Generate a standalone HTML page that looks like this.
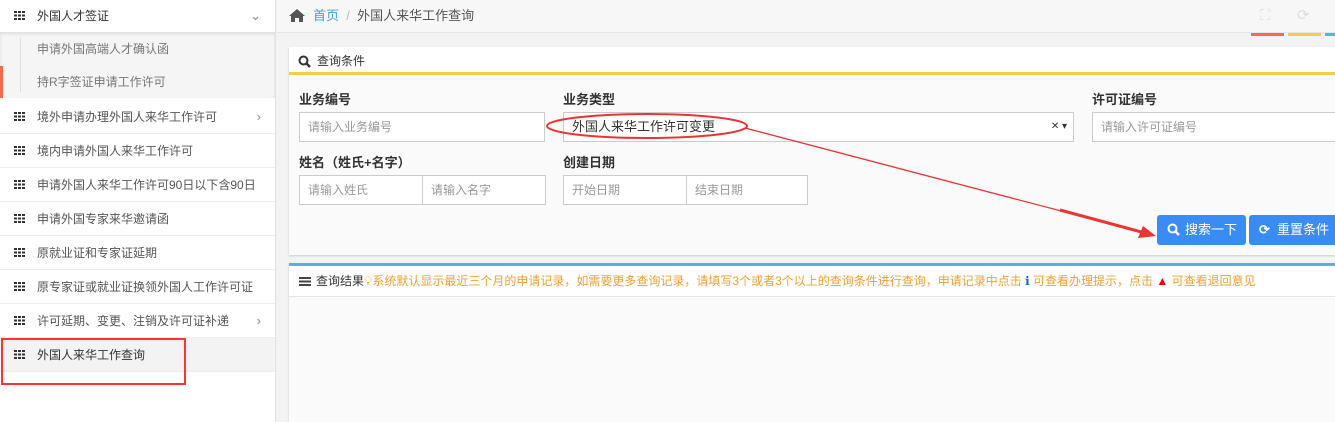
<!DOCTYPE html>
<html><head><meta charset="utf-8"><style>
*{box-sizing:border-box;margin:0;padding:0}
body{width:1335px;height:422px;overflow:hidden;background:#f0f0f0;font-family:"Liberation Sans","Noto Sans CJK SC",sans-serif;font-size:12px;color:#333;position:relative}
.side{position:absolute;left:0;top:0;width:276px;height:422px;background:#fff;border-right:1px solid #e3e3e3}
.it{position:absolute;left:0;width:275px;height:34px;border-bottom:1px solid #eee;line-height:34px;padding-left:37px;color:#555}
.gi{position:absolute;left:14px;top:12px;width:11px;height:9px;background:
linear-gradient(90deg,#333 0 3px,transparent 3px 4px,#333 4px 7px,transparent 7px 8px,#333 8px 11px);
-webkit-mask:repeating-linear-gradient(#000 0 2px,transparent 2px 3.5px);mask:repeating-linear-gradient(#000 0 2.2px,transparent 2.2px 3.4px)}
.chev{position:absolute;right:14px;top:0;color:#888;font-size:13px}
.sub{position:absolute;left:0;top:32px;width:275px;height:66px;background:#f5f5f5;box-shadow:inset 0 2px 3px #ddd}
.sub div{position:absolute;left:37px;color:#777}
.main{position:absolute;left:277px;top:0;right:0;height:422px;background:#f3f3f3}
.bc{position:absolute;left:0;top:0;right:0;height:33px;background:#f7f7f7;border-bottom:1px solid #e5e5e5;line-height:32px;padding-left:36px;font-size:13px;color:#555}
.panel{position:absolute;left:12px;right:0;background:#fafafa;box-shadow:0 1px 2px #ccc}
.lbl{position:absolute;font-weight:bold;font-size:13px;color:#333}
.inp{position:absolute;height:30px;border:1px solid #ccc;background:#fff;line-height:28px;padding-left:8px;color:#999;font-size:12px}
.btn{position:absolute;top:215px;height:30px;background:#3a8cf5;border-radius:3px;color:#fff;font-size:13px;line-height:30px;padding-left:28px}
</style></head><body>
<div class="side">
 <div class="it" style="top:0;height:32px;line-height:32px;color:#333;border:none"><span class="gi" style="top:11px"></span>外国人才签证<span class="chev">⌄</span></div>
 <div class="sub">
  <div style="left:20px;top:6px;width:1px;height:54px;background:#ddd"></div>
  <div style="left:0;top:34px;width:3px;height:32px;background:#f36b4f"></div>
  <div style="top:8px">申请外国高端人才确认函</div>
  <div style="top:41px">持R字签证申请工作许可</div>
 </div>
 <div class="it" style="top:100px"><span class="gi"></span>境外申请办理外国人来华工作许可<span class="chev">›</span></div>
 <div class="it" style="top:134px"><span class="gi"></span>境内申请外国人来华工作许可</div>
 <div class="it" style="top:168px"><span class="gi"></span>申请外国人来华工作许可90日以下含90日</div>
 <div class="it" style="top:202px"><span class="gi"></span>申请外国专家来华邀请函</div>
 <div class="it" style="top:236px"><span class="gi"></span>原就业证和专家证延期</div>
 <div class="it" style="top:270px"><span class="gi"></span>原专家证或就业证换领外国人工作许可证</div>
 <div class="it" style="top:304px"><span class="gi"></span>许可延期、变更、注销及许可证补递<span class="chev">›</span></div>
 <div class="it" style="top:338px;background:#f3f3f3;color:#333"><span class="gi"></span>外国人来华工作查询</div>
 <div style="position:absolute;left:1px;top:338px;width:185px;height:47px;border:2px solid #f33"></div>
</div>
<div class="main">
 <div class="bc"><svg style="position:absolute;left:12px;top:9px" width="16" height="13" viewBox="0 0 16 13"><path d="M8 0L0 7h2v6h4V9h4v4h4V7h2z" fill="#555"/></svg><span style="color:#3ba3dc">首页</span> <span style="color:#bbb">&nbsp;/&nbsp;</span> 外国人来华工作查询
  <span style="position:absolute;left:983px;top:0;color:#ddd;font-size:15px">⛶</span>
  <span style="position:absolute;left:1020px;top:0;color:#ddd;font-size:15px">⟳</span>
 </div>
 <div style="position:absolute;left:974px;top:33px;width:33px;height:3px;background:#f36b4f"></div>
 <div style="position:absolute;left:1011px;top:33px;width:33px;height:3px;background:#fcc74e"></div>
 <div style="position:absolute;left:1048px;top:33px;width:12px;height:3px;background:#3ec1e6"></div>
 <div class="panel" style="top:47px;height:208px">
  <div style="height:28px;background:#fff;border-bottom:3px solid #fccb4e;line-height:28px;padding-left:28px;font-size:12px;color:#333"><svg style="position:absolute;left:9px;top:8px" width="13" height="13" viewBox="0 0 13 13"><circle cx="5.5" cy="5.5" r="4" fill="none" stroke="#333" stroke-width="2"/><path d="M8.5 8.5L12 12" stroke="#333" stroke-width="2.4"/></svg>查询条件</div>
 </div>
 <div class="lbl" style="left:22px;top:89px">业务编号</div>
 <div class="inp" style="left:22px;top:112px;width:246px">请输入业务编号</div>
 <div class="lbl" style="left:286px;top:89px">业务类型</div>
 <div class="inp" style="left:286px;top:112px;width:511px;color:#333;font-size:13px">外国人来华工作许可变更<span style="position:absolute;right:6px;font-size:10px">✕ ▾</span></div>
 <div class="lbl" style="left:815px;top:89px">许可证编号</div>
 <div class="inp" style="left:815px;top:112px;width:250px">请输入许可证编号</div>
 <div class="lbl" style="left:22px;top:152px">姓名（姓氏+名字）</div>
 <div class="inp" style="left:22px;top:175px;width:124px">请输入姓氏</div>
 <div class="inp" style="left:145px;top:175px;width:124px">请输入名字</div>
 <div class="lbl" style="left:286px;top:152px">创建日期</div>
 <div class="inp" style="left:286px;top:175px;width:124px">开始日期</div>
 <div class="inp" style="left:409px;top:175px;width:122px">结束日期</div>
 <div class="btn" style="left:880px;width:89px">搜索一下<svg style="position:absolute;left:10px;top:8px" width="13" height="13" viewBox="0 0 13 13"><circle cx="5.5" cy="5.5" r="4" fill="none" stroke="#fff" stroke-width="2"/><path d="M8.5 8.5L12 12" stroke="#fff" stroke-width="2.4"/></svg></div>
 <div class="btn" style="left:972px;width:90px">重置条件<span style="position:absolute;left:10px;font-weight:bold">⟳</span></div>
 <div class="panel" style="top:263px;bottom:0;border-top:3px solid #4fb3e0">
  <div style="height:31px;background:#fff;border-bottom:1px solid #e3e3e3;line-height:31px;padding-left:27px;font-size:12px;white-space:nowrap"><span style="position:absolute;left:10px;top:11px;width:12px;height:9px;background:repeating-linear-gradient(#444 0 2px,#fff 2px 3.5px)"></span>查询结果<span style="color:#f0a030">💡︎系统默认显示最近三个月的申请记录，如需要更多查询记录，请填写3个或者3个以上的查询条件进行查询，申请记录中点击 <span style="color:#1a5ae0">ℹ</span> 可查看办理提示，点击 <span style="color:#e00">▲</span> 可查看退回意见</span></div>
 </div>
</div>
<svg style="position:absolute;left:0;top:0" width="1335" height="422">
 <ellipse cx="647" cy="126" rx="100" ry="12" fill="none" stroke="#e33" stroke-width="2"/>
 <line x1="745" y1="128" x2="1145" y2="233" stroke="#e33" stroke-width="1.3"/>
 <line x1="1060" y1="210" x2="1145" y2="233" stroke="#e33" stroke-width="3"/>
 <polygon points="1156,236 1138,238 1143,226" fill="#e33"/>
</svg>
</body></html>
